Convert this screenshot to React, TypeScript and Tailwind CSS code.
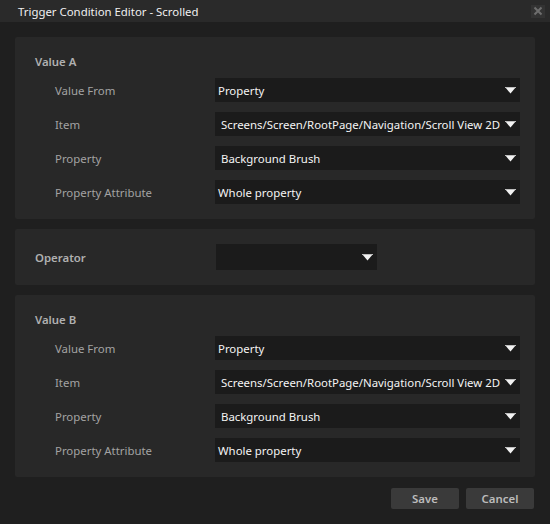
import React from "react";

const font = { fontFamily: '"Segoe UI", "Noto Sans", "Open Sans", sans-serif' };

function Arrow() {
  return (
    <svg width="11" height="7" viewBox="0 0 11 7" className="shrink-0">
      <polygon points="0,0 11,0 5.5,6.5" fill="#f2f2f2" />
      <rect x="0" y="0" width="11" height="1" fill="#bdbdbd" />
    </svg>
  );
}

function Dropdown({ value, pad = "pl-[3px]", w = "w-[305px]", h = "h-[24px]" }: { value?: string; pad?: string; w?: string; h?: string }) {
  return (
    <div className={`${w} ${h} bg-[#1b1b1b] flex items-center justify-between pr-[4px] ${pad}`}>
      <span className="pt-[2px] text-[11.4px] text-[#f4f4f4] whitespace-nowrap">{value}</span>
      <Arrow />
    </div>
  );
}

function Row({ label, value, pad }: { label: string; value: string; pad?: string }) {
  return (
    <div className="flex items-center h-[24px] pl-[20px]">
      <div className="w-[160px] pt-[2px] text-[11.4px] text-[#a3a3a3]">{label}</div>
      <Dropdown value={value} pad={pad} />
    </div>
  );
}

function ValuePanel({ title }: { title: string }) {
  return (
    <div className="bg-[#282828] rounded-[2px] pt-[15px] pb-[15px] pl-[20px] pr-[15px]">
      <div className="h-[18px] leading-[18px] pt-[1px] text-[11.4px] font-semibold text-[#b0b0b0]">{title}</div>
      <div className="mt-[8px] flex flex-col gap-[10px]">
        <Row label="Value From" value="Property" />
        <Row label="Item" value="Screens/Screen/RootPage/Navigation/Scroll View 2D" pad="pl-[6px]" />
        <Row label="Property" value="Background Brush" pad="pl-[6px]" />
        <Row label="Property Attribute" value="Whole property" />
      </div>
    </div>
  );
}

export default function App() {
  return (
    <div style={font} className="w-[550px] h-[524px] bg-[#1f1f1f] flex flex-col overflow-hidden">
      {/* title bar */}
      <div className="h-[22px] bg-[#2a2a2a] flex items-center justify-between pl-[18px] pr-[5px]">
        <span className="pt-[2px] text-[11.4px] text-[#f0f0f0]">Trigger Condition Editor - Scrolled</span>
        <div className="w-[14px] h-[13px] bg-[#333333] flex items-center justify-center">
          <svg width="10" height="10" viewBox="0 0 10 10">
            <path d="M1.5 1.5 L8.5 8.5 M8.5 1.5 L1.5 8.5" stroke="#6e6e6e" strokeWidth="2" />
          </svg>
        </div>
      </div>

      <div className="flex flex-col px-[15px] pt-[15px] gap-[10px]">
        <ValuePanel title="Value A" />

        <div className="bg-[#282828] rounded-[2px] h-[56px] pl-[20px] flex items-center">
          <div className="w-[181px] pt-[2px] text-[11.4px] font-semibold text-[#b0b0b0]">Operator</div>
          <Dropdown w="w-[161px]" h="h-[26px]" />
        </div>

        <ValuePanel title="Value B" />

        <div className="flex justify-end gap-[7px] pt-[1px] pr-px">
          <button className="w-[68px] h-[21px] pt-[1px] bg-[#3a3a3a] rounded-[2px] text-[11.4px] font-semibold text-[#bcbcbc]">Save</button>
          <button className="w-[68px] h-[21px] pt-[1px] bg-[#3a3a3a] rounded-[2px] text-[11.4px] font-semibold text-[#bcbcbc]">Cancel</button>
        </div>
      </div>
    </div>
  );
}
